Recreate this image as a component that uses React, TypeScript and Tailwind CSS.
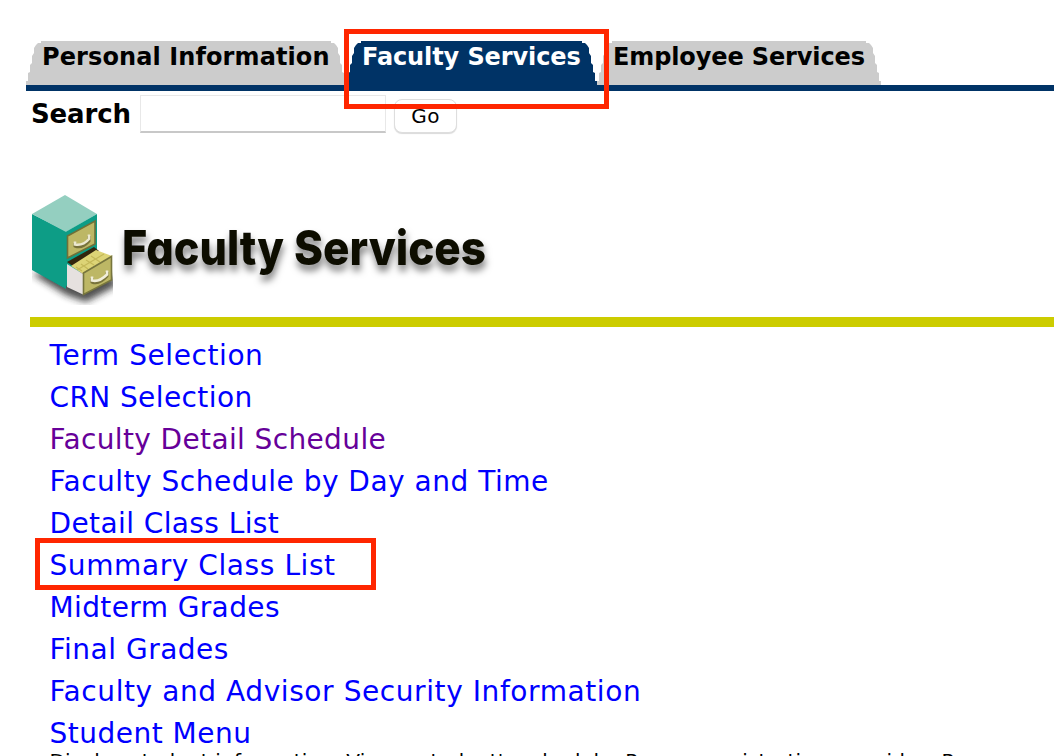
const FONT = "font-['Verdana','DejaVu_Sans',sans-serif]";

function TabEnd({ flip = false, color }: { flip?: boolean; color: string }) {
  return (
    <svg width="16" height="44" viewBox="0 0 16 44" className={flip ? "-scale-x-100" : ""}>
      <path d="M16 0V44H0V40H2V32L4 31V24L6 22V15L8 12V7L10 4L12 2H15V0Z" fill={color} />
    </svg>
  );
}

function Tab({ label, active = false, width, spacing }: { label: string; active?: boolean; width: string; spacing: string }) {
  const color = active ? "#003366" : "#cccccc";
  return (
    <div className="flex h-[44px]">
      <TabEnd color={color} />
      <div
        className={`h-[44px] whitespace-nowrap text-[24px] leading-[32px] font-bold ${width} ${spacing} ${
          active ? "bg-[#003366] text-white" : "bg-[#cccccc] text-black"
        }`}
      >
        {label}
      </div>
      <TabEnd color={color} flip />
    </div>
  );
}

function Cabinet() {
  return (
    <svg width="81" height="110" viewBox="0 0 81 110" className="mr-[9px] shrink-0">
      <defs>
        <filter id="soft" x="-20%" y="-20%" width="140%" height="150%">
          <feGaussianBlur stdDeviation="3.5" />
        </filter>
        <filter id="smooth">
          <feGaussianBlur stdDeviation="0.5" />
        </filter>
      </defs>
      <path d="M0 79L34 100L54 107L84 91V84L40 70Z" fill="#222" opacity=".8" filter="url(#soft)" />
      <g filter="url(#smooth)">
        <path d="M0 19L34 36V94L0 75Z" fill="#0a9d86" />
        <path d="M0 19L33 0L65 19L34 37Z" fill="#94cfc0" />
        <path d="M33.500 37L65 19V60L33.500 92Z" fill="#0a9d86" />
        <path d="M35.500 41L63 26V49L35.500 63Z" fill="#bdb765" stroke="#6f7038" strokeWidth="1.6" />
        <path d="M43 48V51Q50 54 57 46V41" fill="none" stroke="#77723a" strokeWidth="3" />
        <path d="M43 46.500V49.500Q51 51 57 44V39.500" fill="none" stroke="#ece8cf" strokeWidth="2.600" />
        <path d="M35 67L62 52L67 56L42 72Z" fill="#33250f" />
        <path d="M39 71L64 55L80 61L51 79Z" fill="#ddd476" />
        <path d="M44 72L50 76M49 69L56 74M54 65L62 70M59 61L68 67M45 75L72 59" stroke="#c4b858" strokeWidth="1.2" />
        <path d="M35 69L51 79V99.500L35 92Z" fill="#e6e1df" />
        <path d="M51.500 78L79.500 61.500V85L51.500 99.500Z" fill="#bdb765" stroke="#77753e" strokeWidth="1.6" />
        <path d="M60 83V87Q67 90 75 81V77" fill="none" stroke="#77723a" strokeWidth="3" />
        <path d="M60 81.500V85.500Q67 87.500 75 79.500V75.500" fill="none" stroke="#f1eeda" strokeWidth="2.600" />
      </g>
    </svg>
  );
}

const TITLE = "font-['Inter',sans-serif] font-extrabold [font-feature-settings:'cv11'_1]";

function Banner() {
  return (
    <div className="flex h-[122px] pl-[32px]">
      <Cabinet />
      <svg width="380" height="110" viewBox="0 0 380 110" className="overflow-visible">
        <defs>
          <filter id="drop" x="-5%" y="-20%" width="110%" height="160%">
            <feGaussianBlur in="SourceGraphic" stdDeviation="0.5" result="face" />
            <feDropShadow in="face" dx="1" dy="6" stdDeviation="3.5" floodColor="#000" floodOpacity=".5" />
          </filter>
        </defs>
        <g filter="url(#drop)" fill="#0b0b05" fontSize="48" className={TITLE}>
          <text x="0" y="69.5" textLength="162" lengthAdjust="spacingAndGlyphs">Faculty</text>
          <text x="172" y="69.5" textLength="192" lengthAdjust="spacingAndGlyphs">Services</text>
        </g>
      </svg>
    </div>
  );
}

const links = [
  { label: "Term Selection", spacing: "tracking-[0.58px]" },
  { label: "CRN Selection", spacing: "tracking-[0.4px]" },
  { label: "Faculty Detail Schedule", spacing: "tracking-[0.37px]", visited: true },
  { label: "Faculty Schedule by Day and Time", spacing: "tracking-[0.5px]" },
  { label: "Detail Class List", spacing: "tracking-[0.4px]" },
  { label: "Summary Class List", spacing: "tracking-[0.58px]", marked: true },
  { label: "Midterm Grades", spacing: "tracking-[0.38px]" },
  { label: "Final Grades", spacing: "tracking-[0.5px]" },
  { label: "Faculty and Advisor Security Information", spacing: "tracking-[0.58px]" },
  { label: "Student Menu", spacing: "tracking-[0.5px]" },
];

export default function App() {
  return (
    <div className={`relative h-[756px] w-[1054px] overflow-hidden bg-white text-black ${FONT}`}>
      <nav className="ml-[26px] flex h-[91px] border-b-[6px] border-[#003366] pt-[41px]">
        <Tab label="Personal Information" width="w-[288px]" spacing="tracking-[0.1px]" />
        <Tab label="Faculty Services" width="w-[219px]" spacing="tracking-[-0.1px]" active />
        <Tab label="Employee Services" width="w-[252px]" spacing="tracking-[-0.12px]" />
      </nav>
      <form className="flex h-[104px] items-start pt-[4px] pl-[31px]" onSubmit={(e) => e.preventDefault()}>
        <label htmlFor="search" className="w-[109px] text-[26px] leading-[38px] font-bold tracking-[-0.15px]">Search</label>
        <input
          id="search"
          className="h-[38px] w-[246px] border border-b-2 border-[#e8e8e8] border-b-[#c8c8c8] bg-white outline-none"
        />
        <button className="mt-[4px] ml-[8px] h-[34px] w-[63px] rounded-[8px] border border-[#dedede] bg-white text-[20px] leading-[32px] tracking-[0.3px] shadow-[0_1px_1px_rgba(0,0,0,0.15)]">
          Go
        </button>
      </form>
      <Banner />
      <div className="ml-[30px] h-[10px] bg-[#cccc00]" />
      <ul className="pt-[8px] pl-[49.5px]">
        {links.map((l) => (
          <li key={l.label} className={`relative h-[42px] text-[28px] leading-[42px] whitespace-nowrap ${l.spacing}`}>
            <a className={l.visited ? "text-[#660099]" : "text-[#0000ff]"}>{l.label}</a>
            {l.marked && <span className="absolute -top-[7px] -left-[14.5px] h-[52px] w-[341px] border-[5px] border-[#ff2600]" />}
          </li>
        ))}
      </ul>
      <p className="-mt-[6px] pl-[49.5px] text-[20px] leading-[24px] tracking-[0.185px] whitespace-nowrap">
        Display student information; View a student's schedule; Process registration overrides; Process
      </p>
      <div className="absolute top-[29px] left-[344px] h-[80px] w-[265px] border-[5px] border-[#ff2600]" />
    </div>
  );
}
